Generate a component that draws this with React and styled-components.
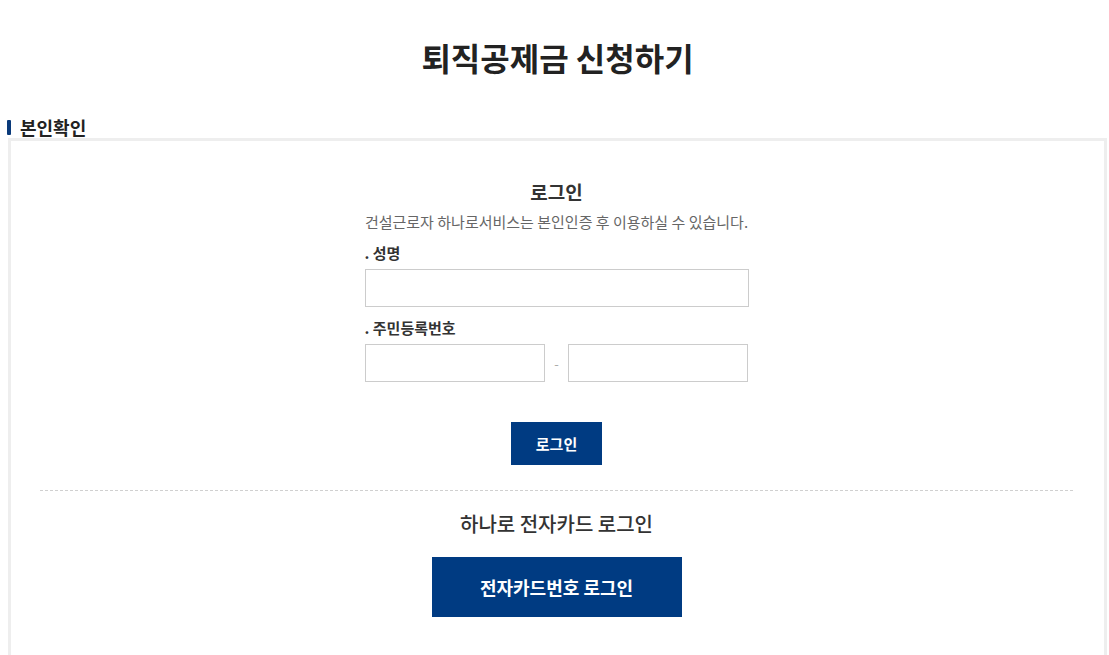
import React from 'react'
import styled, { createGlobalStyle } from 'styled-components'

const GlobalStyle = createGlobalStyle`
  * { box-sizing: border-box; }
  body {
    margin: 0;
    background: #fff;
    font-family: "Noto Sans CJK KR", "Noto Sans", sans-serif;
    color: #222;
  }
`

const Page = styled.div`
  padding: 0 2px 0 8px;
`

const PageTitle = styled.h1`
  margin: 0;
  padding-top: 34px;
  height: 102px;
  text-align: center;
  font-size: 32px;
  font-weight: 700;
  line-height: 46px;
  color: #222;
`

const SectionTitle = styled.h2`
  display: flex;
  align-items: center;
  gap: 9px;
  margin: 15px 0 0 -1px;
  font-size: 18px;
  font-weight: 700;
  line-height: 20px;
  color: #222;
  &::before {
    content: '';
    width: 4px;
    height: 15px;
    border-radius: 1px;
    background: #0a3a7a;
  }
`

const Box = styled.div`
  margin-top: 1px;
  border: 3px solid #eeeeee;
  border-bottom: none;
  padding: 38px 31px 38px 29px;
  min-height: 520px;
`

const Form = styled.div`
  width: 384px;
  margin: 0 auto;
  display: flex;
  flex-direction: column;
`

const FormTitle = styled.h3`
  margin: 0;
  text-align: center;
  font-size: 19px;
  font-weight: 700;
  line-height: 26px;
  color: #333;
`

const Lead = styled.p`
  margin: 7px 0 0;
  text-align: center;
  font-size: 15px;
  line-height: 20px;
  color: #666;
  white-space: nowrap;
`

const Label = styled.label`
  display: block;
  margin: ${p => p.$top}px 0 6px;
  font-size: 15px;
  font-weight: 700;
  line-height: 20px;
  color: #333;
`

const Input = styled.input`
  display: block;
  width: ${p => p.$width || '100%'};
  height: 38px;
  border: 1px solid #cccccc;
  padding: 0 10px;
  font-size: 14px;
  font-family: inherit;
  outline: none;
  background: #fff;
`

const IdRow = styled.div`
  display: flex;
  align-items: center;
  justify-content: space-between;
`

const Dash = styled.span`
  font-size: 13px;
  color: #aaa;
`

const Button = styled.button`
  display: block;
  margin: ${p => p.$top}px auto 0;
  width: ${p => p.$w}px;
  height: ${p => p.$h}px;
  border: none;
  background: #003b82;
  color: #fff;
  font-family: inherit;
  font-size: ${p => p.$size}px;
  font-weight: 700;
  cursor: pointer;
`

const Divider = styled.hr`
  margin: 25px 0 0;
  border: none;
  border-top: 1px dashed #d0d0d0;
`

const CardTitle = styled.h3`
  margin: 20px 0 0;
  text-align: center;
  font-size: 20px;
  font-weight: 500;
  line-height: 26px;
  color: #333;
`

export default function App() {
  return (
    <>
      <GlobalStyle />
      <Page>
        <PageTitle>퇴직공제금 신청하기</PageTitle>
        <SectionTitle>본인확인</SectionTitle>
        <Box>
          <Form>
            <FormTitle>로그인</FormTitle>
            <Lead>건설근로자 하나로서비스는 본인인증 후 이용하실 수 있습니다.</Lead>
            <Label $top={11}>. 성명</Label>
            <Input type="text" />
            <Label $top={11}>. 주민등록번호</Label>
            <IdRow>
              <Input type="text" $width="180px" />
              <Dash>-</Dash>
              <Input type="password" $width="180px" />
            </IdRow>
            <Button $top={40} $w={91} $h={43} $size={15}>로그인</Button>
          </Form>
          <Divider />
          <CardTitle>하나로 전자카드 로그인</CardTitle>
          <Button $top={20} $w={250} $h={60} $size={18}>전자카드번호 로그인</Button>
        </Box>
      </Page>
    </>
  )
}
